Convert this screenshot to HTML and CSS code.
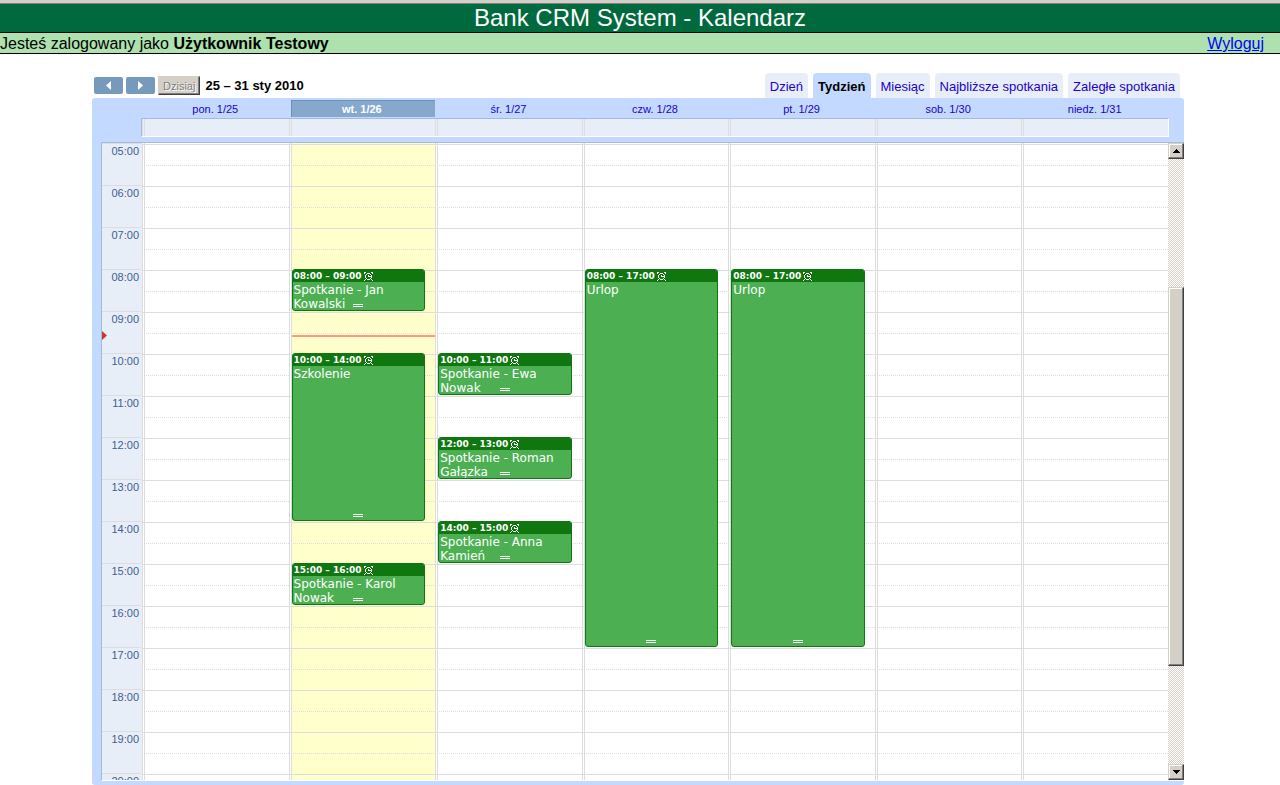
FILE: index.html
```html
<!DOCTYPE html>
<html lang="pl">
<head>
<meta charset="utf-8">
<title>Bank CRM System - Kalendarz</title>
<link rel="stylesheet" href="styles.css">
</head>
<body>
<svg class="defs" width="0" height="0" aria-hidden="true">
  <symbol id="alarm" viewBox="0 0 9 9">
    <path d="M0 0h2v1H1v1H0zM7 0h2v2H8V1H7zM3 1h3v1H3zM2 2h1v1H2zM6 2h1v1H6zM1 3h1v3H1zM7 3h1v3H7zM4 3h1v1h2v1H4zM2 6h1v1H2zM6 6h1v1H6zM3 7h3v1H3zM1 7h1v1H1zM7 7h1v1H7zM0 8h1v1H0zM8 8h1v1H8z"/>
  </symbol>
</svg>
<header class="banner"><h1>Bank CRM System - Kalendarz</h1></header>
<div class="session">
  <span>Jesteś zalogowany jako <b>Użytkownik Testowy</b></span>
  <a href="#">Wyloguj</a>
</div>
<main class="page">
  <div class="toolbar">
    <div class="nav">
      <button class="arrow" type="button" aria-label="Poprzedni tydzień"><svg width="5" height="9" viewBox="0 0 5 9"><path d="M5 0v9L0 4.500z"/></svg></button>
      <button class="arrow" type="button" aria-label="Następny tydzień"><svg width="5" height="9" viewBox="0 0 5 9"><path d="M0 0v9l5-4.500z"/></svg></button>
      <button class="today-btn" type="button" disabled>Dzisiaj</button>
      <h2>25 – 31 sty 2010</h2>
    </div>
    <nav class="tabs">
      <a href="#">Dzień</a>
      <a href="#" class="active" aria-current="page">Tydzień</a>
      <a href="#">Miesiąc</a>
      <a href="#">Najbliższe spotkania</a>
      <a href="#">Zaległe spotkania</a>
    </nav>
  </div>
  <section class="calendar">
    <div class="week heads">
      <a href="#">pon. 1/25</a>
      <a href="#" class="current">wt. 1/26</a>
      <a href="#">śr. 1/27</a>
      <a href="#">czw. 1/28</a>
      <a href="#">pt. 1/29</a>
      <a href="#">sob. 1/30</a>
      <a href="#">niedz. 1/31</a>
    </div>
    <div class="week allday"><i></i><i></i><i></i><i></i><i></i><i></i><i></i></div>
    <div class="body">
      <div class="viewport">
        <div class="hours">
          <span>05:00</span><span>06:00</span><span>07:00</span><span>08:00</span><span>09:00</span><span>10:00</span><span>11:00</span><span>12:00</span><span>13:00</span><span>14:00</span><span>15:00</span><span>16:00</span><span>17:00</span><span>18:00</span><span>19:00</span><span>20:00</span>
          <svg class="now-mark" width="5" height="9" viewBox="0 0 5 9"><path d="M0 0l5 4.500L0 9z"/></svg>
        </div>
        <div class="week days">
          <div class="day"></div>
          <div class="day today">
            <article class="event h8"><h3>08:00 – 09:00 <svg><use href="#alarm"/></svg></h3><p>Spotkanie - Jan Kowalski</p></article>
            <article class="event h10 long4"><h3>10:00 – 14:00 <svg><use href="#alarm"/></svg></h3><p>Szkolenie</p></article>
            <article class="event h15"><h3>15:00 – 16:00 <svg><use href="#alarm"/></svg></h3><p>Spotkanie - Karol Nowak</p></article>
            <div class="now-line"></div>
          </div>
          <div class="day">
            <article class="event h10"><h3>10:00 – 11:00 <svg><use href="#alarm"/></svg></h3><p>Spotkanie - Ewa Nowak</p></article>
            <article class="event h12"><h3>12:00 – 13:00 <svg><use href="#alarm"/></svg></h3><p>Spotkanie - Roman Gałązka</p></article>
            <article class="event h14"><h3>14:00 – 15:00 <svg><use href="#alarm"/></svg></h3><p>Spotkanie - Anna Kamień</p></article>
          </div>
          <div class="day">
            <article class="event h8 long9"><h3>08:00 – 17:00 <svg><use href="#alarm"/></svg></h3><p>Urlop</p></article>
          </div>
          <div class="day">
            <article class="event h8 long9"><h3>08:00 – 17:00 <svg><use href="#alarm"/></svg></h3><p>Urlop</p></article>
          </div>
          <div class="day"></div>
          <div class="day"></div>
        </div>
      </div>
      <div class="scrollbar">
        <button type="button" aria-label="W górę"><svg width="7" height="4" viewBox="0 0 7 4"><path d="M3 0h1v1h1v1h1v1h1v1H0V3h1V2h1V1h1z"/></svg></button>
        <div class="track"><div class="before"></div><div class="thumb"></div><div class="after"></div></div>
        <button type="button" aria-label="W dół"><svg width="7" height="4" viewBox="0 0 7 4"><path d="M0 0h7v1H6v1H5v1H4v1H3V3H2V2H1V1H0z"/></svg></button>
      </div>
    </div>
  </section>
</main>
</body>
</html>
```
FILE: styles.css
```css
*, *::after { box-sizing: border-box; }
body {
  margin: 0;
  height: 100vh;
  display: flex;
  flex-direction: column;
  font-family: "Liberation Sans", Arial, sans-serif;
  background: #fff;
  color: #000;
  overflow: hidden;
}
h1, h2, h3, p { margin: 0; }
.defs { position: absolute; }

.banner {
  border-top: 3px solid #d4d0c8;
  background: #006a3e;
  box-shadow: inset 0 1px #808080;
  border-bottom: 1px solid #000;
  text-align: center;
  color: #fff;
}
.banner h1 { font-size: 24px; line-height: 29px; font-weight: 400; }
.session {
  display: flex;
  justify-content: space-between;
  padding: 1px 16px 0 0;
  background: #ade1ae;
  border-bottom: 1px solid #000;
  font-size: 16px;
  line-height: 19px;
}
.session a { color: #00f; }

.page {
  flex: 1;
  min-height: 0;
  display: flex;
  flex-direction: column;
  padding: 19px 96px 0 92px;
}
.toolbar {
  display: flex;
  justify-content: space-between;
  padding: 0 4px 0 2px;
}
.nav { display: flex; align-items: center; gap: 3px; }
.nav h2 { padding: 1px 0 0 2px; font-size: 13px; line-height: 20px; }
.arrow {
  display: flex;
  align-items: center;
  justify-content: center;
  width: 29px;
  height: 17px;
  padding: 0;
  border: 0;
  border-radius: 2px;
  background: #7799bb;
  fill: #fff;
}
.today-btn {
  height: 19px;
  padding: 0 4px;
  border: 1px solid;
  border-color: #d4d0c8 #404040 #404040 #d4d0c8;
  box-shadow: inset -1px -1px #808080;
  background: #d4d0c8;
  color: #808080;
  font: 11px "Liberation Sans", Arial, sans-serif;
  text-shadow: 1px 1px #fff;
}
.tabs { display: flex; gap: 5px; }
.tabs a {
  padding: 3px 5px 0;
  border-radius: 4px 4px 0 0;
  background: #e8eef7;
  color: #2200cc;
  font-size: 13px;
  line-height: 22px;
  text-decoration: none;
}
.tabs .active { background: #c3d9ff; color: #000; font-weight: 700; }

.calendar {
  flex: 1;
  min-height: 0;
  display: flex;
  flex-direction: column;
  padding-bottom: 4px;
  background: #c3d9ff;
  border-radius: 3px;
}
.week { display: grid; grid-template-columns: repeat(7, 1fr); }
.heads { margin: 0 16px 0 50px; }
.heads a {
  margin: 2px 0 1px 2px;
  padding: 1px 2px 0 0;
  color: #2200cc;
  font-size: 11px;
  line-height: 16px;
  text-align: center;
  text-decoration: none;
}
.heads .current {
  background: #87a8cd;
  box-shadow: inset 1px 1px #6f8fb5;
  color: #fff;
  font-weight: 700;
}
.allday {
  height: 19px;
  margin: 0 15px 5px 49px;
  border: 1px solid #fff;
  border-top-color: #a2bbdd;
  border-left-color: #a2bbdd;
  background: #e8eef7;
}
.allday i { border-left: 1px solid #ddd; box-shadow: inset 1px 0 #e8eef7, inset 2px 0 #ddd; }

.body {
  flex: 1;
  min-height: 0;
  display: flex;
  padding-left: 9px;
}
.viewport {
  flex: 1;
  min-width: 0;
  display: flex;
  border: solid;
  border-width: 1px 0 1px 1px;
  border-color: #a2bbdd #fff #fff #a2bbdd;
  overflow: hidden;
}
.hours {
  position: relative;
  width: 40px;
  height: 672px;
  background: #e8eef7;
}
.hours span {
  display: block;
  height: 42px;
  margin-right: 1px;
  border-top: 1px solid #ddd;
  padding-right: 2px;
  color: #3d6090;
  font-size: 11px;
  line-height: 14px;
  text-align: right;
}
.now-mark { position: absolute; left: 0; top: 188px; fill: #cc3333; }
.days { flex: 1; }
.day {
  position: relative;
  height: 672px;
  display: grid;
  grid-template-rows: repeat(16, 42px);
  padding: 0 10px 0 3px;
  background:
    linear-gradient(transparent 1px, #ddd 1px, #ddd 2px, transparent 2px) 0 0 / 100% 42px,
    linear-gradient(90deg, #ddd 1px, #fff 1px, #fff 2px, #ddd 2px) 0 0 / 3px 100% no-repeat,
    conic-gradient(at 1px 1px, transparent 75%, #ddd 0) 0 22px / 2px 42px,
    #fff;
}
.today { background-color: #ffffcc; }
.event {
  position: relative;
  overflow: hidden;
  border: 1px solid #107710;
  border-radius: 3px;
  background: #4cb052;
  color: #fff;
  font-family: Verdana, "DejaVu Sans", sans-serif;
}
.event::after {
  content: "";
  position: absolute;
  left: calc(50% - 5px);
  bottom: 3px;
  width: 10px;
  height: 3px;
  border: solid #fff;
  border-width: 1px 0;
}
.event h3 {
  display: flex;
  align-items: center;
  gap: 2px;
  height: 12px;
  padding: 1px 0 0 1px;
  background: #107710;
  font-size: 9px;
  line-height: 11px;
  white-space: nowrap;
}
.event svg { width: 9px; height: 9px; fill: #fff; shape-rendering: crispEdges; }
.event p { padding: 1px; font-size: 12px; line-height: 14px; }
.h8 { grid-row: 4; }
.h10 { grid-row: 6; }
.h12 { grid-row: 8; }
.h14 { grid-row: 10; }
.h15 { grid-row: 11; }
.h8.long9 { grid-row: 4 / span 9; }
.h10.long4 { grid-row: 6 / span 4; }
.now-line {
  position: absolute;
  top: 192px;
  left: 3px;
  right: 0;
  height: 2px;
  background: #ff9980;
}

.scrollbar {
  width: 16px;
  display: flex;
  flex-direction: column;
  border-top: 1px solid #a2bbdd;
  border-bottom: 1px solid #fff;
}
.scrollbar button, .thumb {
  border: 1px solid;
  border-color: #d4d0c8 #404040 #404040 #d4d0c8;
  box-shadow: inset -1px -1px #808080, inset 1px 1px #fff;
  background: #d4d0c8;
}
.scrollbar button {
  display: flex;
  align-items: center;
  justify-content: center;
  height: 16px;
  padding: 0;
}
.track {
  flex: 1;
  display: flex;
  flex-direction: column;
  background: conic-gradient(#fff 25%, #d4d0c8 0 50%, #fff 0 75%, #d4d0c8 0) 0 0 / 2px 2px;
}
.before { flex: 128; }
.thumb { flex: 379; }
.after { flex: 98; }
```
